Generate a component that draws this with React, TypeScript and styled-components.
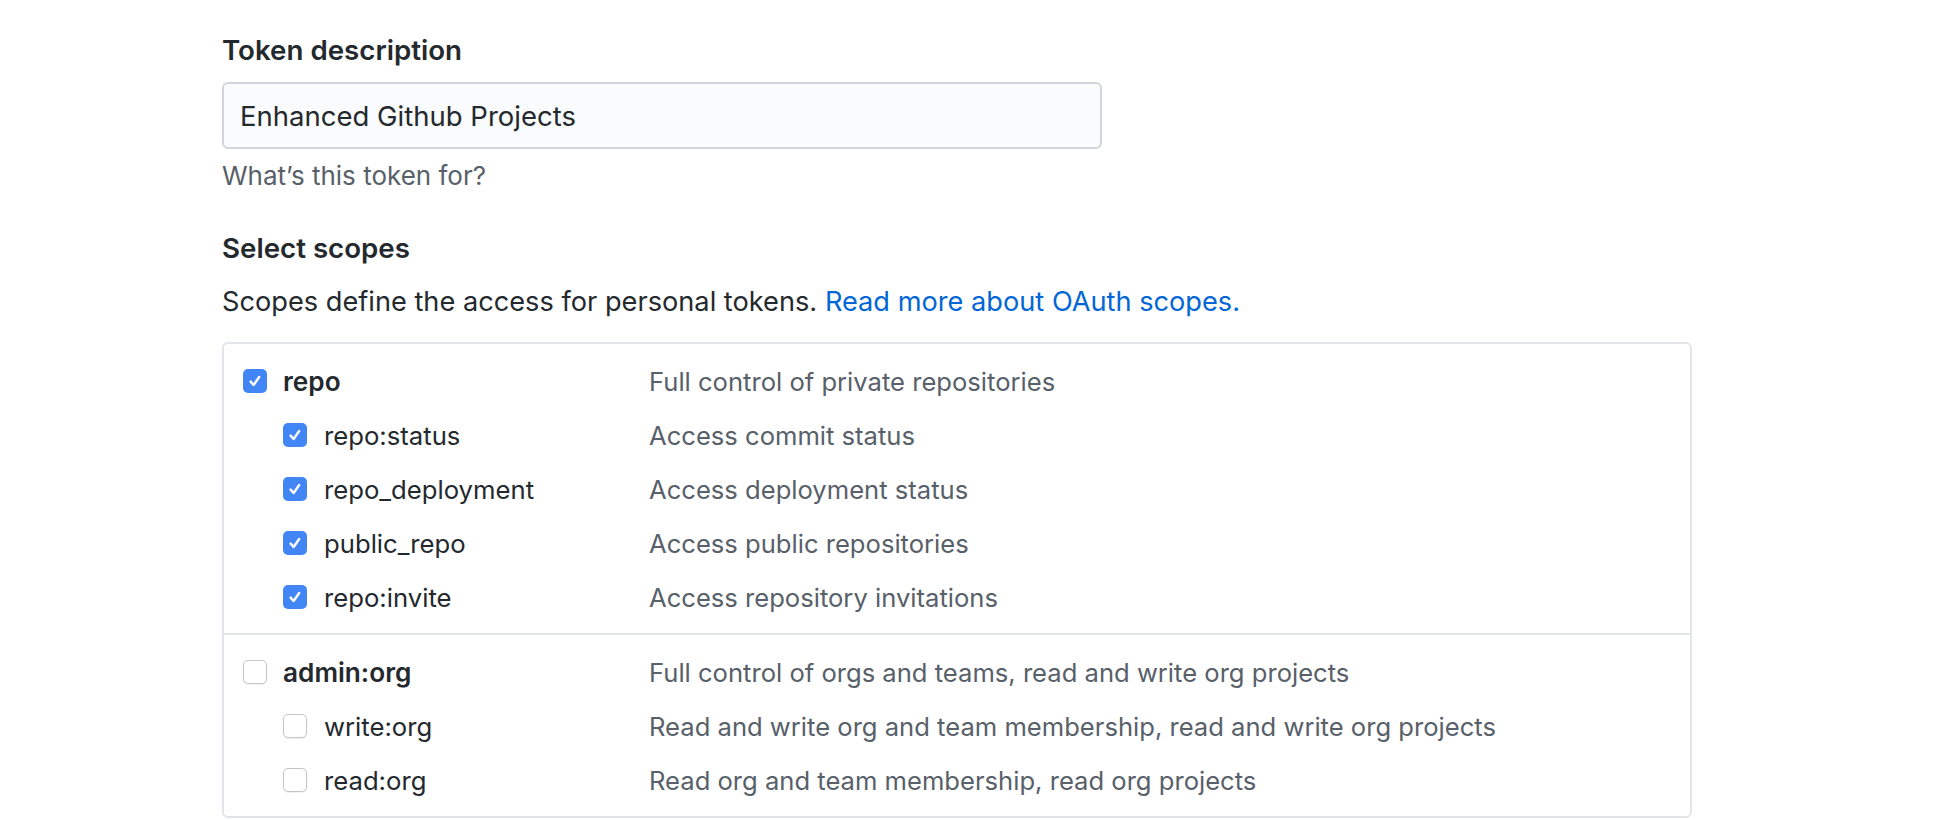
import styled, { createGlobalStyle } from "styled-components";

const GlobalStyle = createGlobalStyle`
  html, body {
    margin: 0;
    padding: 0;
    background: #ffffff;
  }

  body {
    font-family: Inter, "Noto Sans", "Liberation Sans", sans-serif;
    color: #24292e;
  }
`;

const Page = styled.main`
  box-sizing: border-box;
  padding: 30px 0 0 222px;
  width: 1960px;
  height: 820px;
  overflow: hidden;
`;

const Label = styled.label`
  display: block;
  font-size: 27.7px;
  font-weight: 600;
  line-height: 40px;
  margin-bottom: 12px;
`;

const TextInput = styled.input`
  box-sizing: border-box;
  display: block;
  width: 880px;
  height: 67px;
  padding: 0 16px;
  border: 2px solid #d1d5da;
  border-radius: 6px;
  background: #fafbfc;
  font-family: inherit;
  font-size: 27.5px;
  color: #24292e;
  outline: none;
`;

const Note = styled.p`
  margin: 7px 0 0;
  font-size: 26px;
  line-height: 40px;
  color: #586069;
`;

const Heading = styled.h3`
  margin: 32px 0 0;
  font-size: 27.7px;
  font-weight: 600;
  line-height: 40px;
`;

const Intro = styled.p`
  margin: 14px 0 0;
  font-size: 27.2px;
  line-height: 40px;

  a {
    color: #0366d6;
    text-decoration: none;
  }
`;

const ScopesBox = styled.div`
  box-sizing: border-box;
  width: 1470px;
  margin-top: 20px;
  border: 2px solid #e1e4e8;
  border-radius: 6px;
`;

const ScopeGroup = styled.div`
  padding: 10px 0 9px;

  & + & {
    border-top: 2px solid #e1e4e8;
  }
`;

const Row = styled.div`
  display: grid;
  grid-template-columns: 425px 1fr;
  align-items: center;
  height: 54px;
`;

const Name = styled.span<{ $child?: boolean }>`
  display: flex;
  align-items: center;
  gap: ${(p) => (p.$child ? "17px" : "16px")};
  padding-left: ${(p) => (p.$child ? "59px" : "19px")};
  font-size: ${(p) => (p.$child ? "25.7px" : "26.2px")};
  font-weight: ${(p) => (p.$child ? 400 : 600)};
  color: #24292e;
`;

const Box = styled.span<{ $checked?: boolean }>`
  box-sizing: border-box;
  display: inline-flex;
  align-items: center;
  justify-content: center;
  flex: none;
  width: 24px;
  height: 24px;
  border-radius: 5px;
  background: ${(p) => (p.$checked ? "#4285f4" : "#ffffff")};
  border: ${(p) => (p.$checked ? "none" : "1.5px solid #c2c5c9")};
  box-shadow: ${(p) => (p.$checked ? "none" : "0 1px 1px rgba(0,0,0,0.06)")};
`;

const Desc = styled.span`
  font-size: 25.6px;
  color: #586069;
`;

type Scope = { name: string; desc: string; child?: boolean };

const groups: { checked: boolean; scopes: Scope[] }[] = [
  {
    checked: true,
    scopes: [
      { name: "repo", desc: "Full control of private repositories" },
      { name: "repo:status", desc: "Access commit status", child: true },
      { name: "repo_deployment", desc: "Access deployment status", child: true },
      { name: "public_repo", desc: "Access public repositories", child: true },
      { name: "repo:invite", desc: "Access repository invitations", child: true },
    ],
  },
  {
    checked: false,
    scopes: [
      { name: "admin:org", desc: "Full control of orgs and teams, read and write org projects" },
      {
        name: "write:org",
        desc: "Read and write org and team membership, read and write org projects",
        child: true,
      },
      { name: "read:org", desc: "Read org and team membership, read org projects", child: true },
    ],
  },
];

const Check = ({ checked }: { checked: boolean }) => (
  <Box $checked={checked}>
    {checked ? (
      <svg width="16" height="16" viewBox="0 0 16 16">
        <path
          d="M3.6 8.6 L6.6 12 L12.2 4"
          fill="none"
          stroke="#fff"
          strokeWidth="2.4"
          strokeLinecap="round"
          strokeLinejoin="round"
        />
      </svg>
    ) : null}
  </Box>
);

const App = () => {
  return (
    <>
      <GlobalStyle />
      <Page>
        <Label htmlFor="token-description">Token description</Label>
        <TextInput id="token-description" defaultValue="Enhanced Github Projects" />
        <Note>What’s this token for?</Note>

        <Heading>Select scopes</Heading>
        <Intro>
          Scopes define the access for personal tokens.{" "}
          <a href="#scopes">Read more about OAuth scopes.</a>
        </Intro>

        <ScopesBox>
          {groups.map((group, gi) => (
            <ScopeGroup key={gi}>
              {group.scopes.map((scope) => (
                <Row key={scope.name}>
                  <Name $child={scope.child}>
                    <Check checked={group.checked} />
                    {scope.name}
                  </Name>
                  <Desc>{scope.desc}</Desc>
                </Row>
              ))}
            </ScopeGroup>
          ))}
        </ScopesBox>
      </Page>
    </>
  );
};

export default App;
